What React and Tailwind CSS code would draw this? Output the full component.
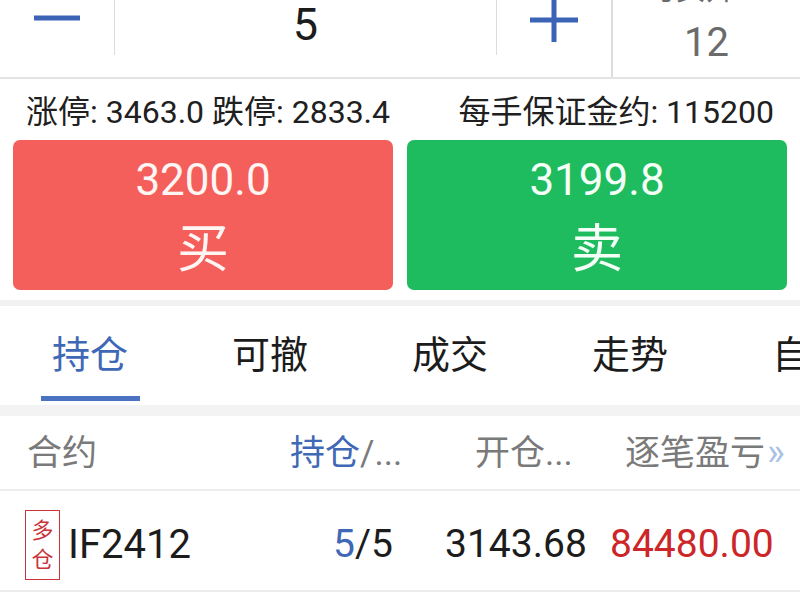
import React from 'react';

const FONT = { fontFamily: "Roboto, 'Noto Sans CJK SC', sans-serif" };

const tabs = ['持仓', '可撤', '成交', '走势', '自选'];

export default function App() {
  return (
    <div className="w-[800px] h-[600px] overflow-hidden bg-white text-[#1c1c1c]" style={FONT}>
      {/* Quantity stepper */}
      <div className="flex h-[79px] overflow-hidden border-b-2 border-[#e4e4e4]">
        <div className="flex h-[55px] items-start">
          <div className="flex h-full w-[115px] justify-center border-r border-[#dcdcdc] pt-[15px]">
            <svg width="46" height="6" viewBox="0 0 46 6">
              <rect width="46" height="5" y="0.5" fill="#3b63b6" />
            </svg>
          </div>
          <div className="flex h-full w-[382px] justify-center border-r border-[#dcdcdc]">
            <span className="text-[45px] leading-[50px]">5</span>
          </div>
          <div className="flex h-full w-[114px] justify-center">
            <svg width="48" height="42" viewBox="0 0 48 42">
              <rect x="0" y="17.5" width="48" height="5" fill="#3b63b6" />
              <rect x="21.5" y="0" width="5" height="42" fill="#3b63b6" />
            </svg>
          </div>
        </div>
        <div className="flex flex-1 flex-col items-center border-l-2 border-[#dcdcdc] -mt-[29px] text-[#6b6b6b]">
          <span className="text-[30px] leading-[36px]">可买开&lt;=</span>
          <span className="mt-[12px] text-[40px] leading-[48px]">12</span>
        </div>
      </div>

      {/* Limit info */}
      <div className="flex h-[61px] items-center justify-between px-[26px] pt-[4px] text-[32px] text-[#202020]">
        <span>涨停: 3463.0 跌停: 2833.4</span>
        <span>每手保证金约: 115200</span>
      </div>

      {/* Buy / Sell */}
      <div className="flex gap-[14px] px-[13px] pb-[10px]">
        <div className="flex h-[150px] flex-1 flex-col items-center rounded-[7px] bg-[#f45f5c] pt-[14px] text-[#fff6f4]">
          <span className="text-[44px] leading-[52px]">3200.0</span>
          <span className="mt-[14px] text-[52px] leading-[60px]">买</span>
        </div>
        <div className="flex h-[150px] flex-1 flex-col items-center rounded-[7px] bg-[#1fbb5f] pt-[14px] text-[#f4fff7]">
          <span className="text-[44px] leading-[52px]">3199.8</span>
          <span className="mt-[14px] text-[52px] leading-[60px]">卖</span>
        </div>
      </div>

      <div className="h-[6px] bg-[#f1f1f1]" />

      {/* Tabs */}
      <div className="flex h-[99px] overflow-hidden">
        {tabs.map((t, i) => (
          <div key={t} className="flex w-[180px] shrink-0 flex-col items-center pt-[25px]">
            <span className={`text-[38px] leading-[48px] ${i === 0 ? 'text-[#3f68b6]' : 'text-[#1c1c1c]'}`}>
              {t}
            </span>
            {i === 0 && <div className="mt-[17px] h-[5px] w-[99px] bg-[#4a72c0]" />}
          </div>
        ))}
      </div>

      <div className="h-[11px] bg-[#f3f3f3]" />

      {/* Table header */}
      <div className="flex h-[75px] items-center border-b-2 border-[#ececec] pl-[27px] pt-[4px] text-[35px] text-[#7a7a7a]">
        <span className="w-[263px]">合约</span>
        <span className="w-[185px]">
          <span className="text-[#3f68b6]">持仓</span>/...
        </span>
        <span className="w-[150px]">开仓...</span>
        <span className="whitespace-nowrap">
          逐笔盈亏<span className="ml-[2px] text-[38px] leading-none text-[#a9c2e4]">»</span>
        </span>
      </div>

      {/* Position row */}
      <div className="flex h-[101px] items-center border-b-2 border-[#ececec] pl-[25px] pt-[8px] text-[39px]">
        <div className="flex w-[308px] items-center">
          <div className="flex h-[70px] w-[35px] flex-col items-center justify-center border-[1.5px] border-[#c8343a] text-[22px] leading-[29px] text-[#c8343a]">
            <span>多</span>
            <span>仓</span>
          </div>
          <span className="ml-[8px] text-[40px]">IF2412</span>
        </div>
        <span className="w-[112px]">
          <span className="text-[#3f68b6]">5</span>/5
        </span>
        <span className="w-[165px]">3143.68</span>
        <span className="text-[#cc2628]">84480.00</span>
      </div>
    </div>
  );
}
